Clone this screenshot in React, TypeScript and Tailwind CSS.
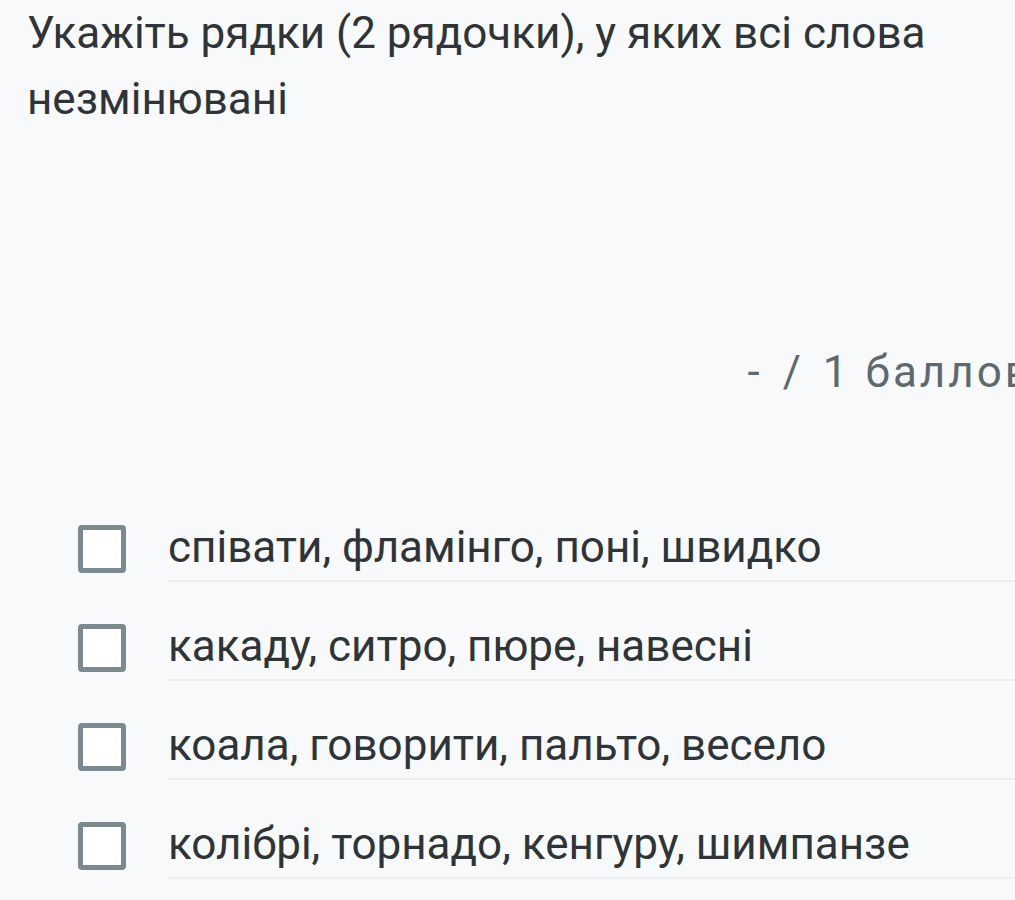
import React from "react";

const options = [
  "співати, фламінго, поні, швидко",
  "какаду, ситро, пюре, навесні",
  "коала, говорити, пальто, весело",
  "колібрі, торнадо, кенгуру, шимпанзе",
];

export default function App() {
  return (
    <div
      className="w-[1015px] h-[900px] overflow-hidden bg-[#f8f9fa] text-[#2e3437]"
      style={{ fontFamily: "Roboto, 'Noto Sans', sans-serif" }}
    >
      <div className="w-[1060px]">
        <h1 className="pl-[27px] pt-0 text-[44px] leading-[66px] font-normal pr-[80px]">
          Укажіть рядки (2 рядочки), у яких всі слова незмінювані
        </h1>
        <div className="mt-[216px] w-[1033px] flex justify-end text-[44px] leading-[48px] text-[#5c6a70]">
          <span>-</span>
          <span className="ml-[23px]">/</span>
          <span className="ml-[22px]">1</span>
          <span className="ml-[18px] tracking-[3px]">баллов</span>
        </div>
        <div className="mt-[87px] flex flex-col">
          {options.map((o) => (
            <div key={o} className="flex h-[99px]">
              <div className="ml-[78px] mt-[42px] w-[48px] h-[48px] border-[5px] border-[#7b8a91] rounded-[4px] bg-white shrink-0" />
              <div className="ml-[42px] flex-1 border-b-2 border-[#eceff1]">
                <div className="mt-[40px] text-[44px] leading-[48px]">{o}</div>
              </div>
            </div>
          ))}
        </div>
      </div>
    </div>
  );
}
